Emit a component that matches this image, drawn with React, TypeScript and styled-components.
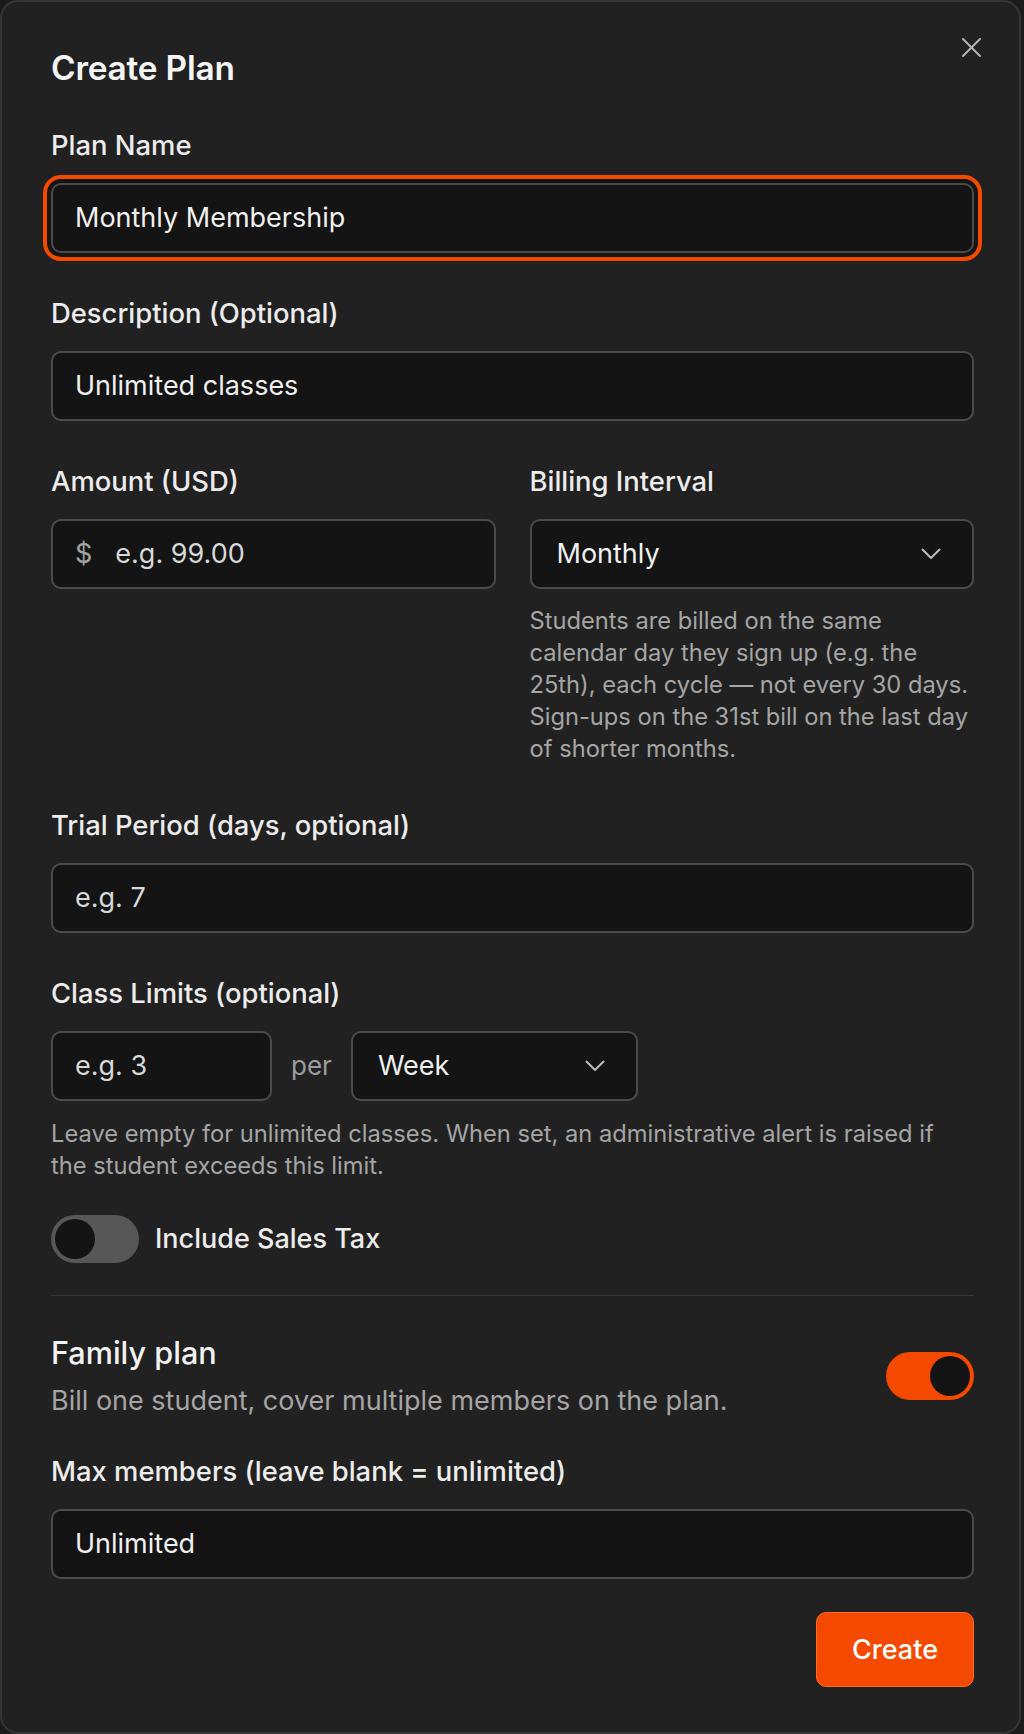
import styled, { createGlobalStyle, css } from 'styled-components';

const GlobalStyle = createGlobalStyle`
  html, body {
    margin: 0;
    padding: 0;
    background: #1b1b1b;
  }
  body {
    font-family: Inter, "Noto Sans", sans-serif;
    -webkit-font-smoothing: antialiased;
  }
  * {
    box-sizing: border-box;
  }
`;

const Panel = styled.div`
  position: relative;
  width: 1021px;
  background: #212121;
  border: 2px solid #353535;
  border-radius: 18px;
  padding: 46px 45px 45px 49px;
  color: #ececec;
`;

const Title = styled.h2`
  margin: 0;
  font-size: 33.4px;
  font-weight: 600;
  line-height: 40px;
  color: #f4f4f4;
  letter-spacing: -0.2px;
`;

const CloseButton = styled.button`
  position: absolute;
  top: 36px;
  right: 38px;
  width: 19px;
  height: 19px;
  padding: 0;
  border: 0;
  background: none;
  color: #b4b4b4;
  display: flex;
  align-items: center;
  justify-content: center;
  cursor: pointer;
`;

const Field = styled.div<{ $mt?: number }>`
  display: flex;
  flex-direction: column;
  gap: 22px;
  margin-top: ${({ $mt = 0 }) => $mt}px;
`;

const Label = styled.label`
  font-size: 27.4px;
  font-weight: 500;
  line-height: 32px;
  color: #ececec;
`;

const InputShell = styled.div<{ $focused?: boolean; $width?: number }>`
  display: flex;
  align-items: center;
  gap: 23px;
  height: 70px;
  padding: 0 22px;
  background: #141414;
  border: 2px solid #4b4b4b;
  border-radius: 10px;
  ${({ $width }) => $width && `width: ${$width}px; flex-shrink: 0;`}
  ${({ $focused }) =>
    $focused &&
    css`
      box-shadow: 0 0 0 4px #151515;
      outline: 4px solid #f54900;
      outline-offset: 4px;
    `}
`;

const TextInput = styled.input`
  flex: 1;
  min-width: 0;
  background: transparent;
  border: 0;
  outline: none;
  padding: 0;
  font-family: inherit;
  font-size: 27px;
  color: #f0f0f0;
  &::placeholder {
    color: #d8d8d8;
    opacity: 1;
  }
`;

const Prefix = styled.span`
  font-size: 27px;
  color: #a3a3a3;
`;

const SelectBox = styled.div<{ $width?: number }>`
  display: flex;
  align-items: center;
  justify-content: space-between;
  height: 70px;
  padding: 0 31px 0 25px;
  background: #141414;
  border: 2px solid #4b4b4b;
  border-radius: 10px;
  font-size: 27px;
  color: #f0f0f0;
  cursor: pointer;
  ${({ $width }) => $width && `width: ${$width}px; flex-shrink: 0;`}
`;

const TwoCols = styled.div`
  display: grid;
  grid-template-columns: minmax(0, 1fr) minmax(0, 1fr);
  column-gap: 34px;
  margin-top: 44px;
`;

const Column = styled.div`
  display: flex;
  flex-direction: column;
`;

const Helper = styled.p<{ $mt?: number }>`
  margin: ${({ $mt = 16 }) => $mt}px 0 0;
  font-size: 23.7px;
  line-height: 32px;
  color: #a5a5a5;
`;

const LimitRow = styled.div`
  display: flex;
  align-items: center;
  gap: 19px;
`;

const Per = styled.span`
  font-size: 26px;
  color: #9d9d9d;
`;

const SwitchRow = styled.label`
  display: flex;
  align-items: center;
  gap: 16px;
  margin-top: 33px;
  font-size: 27px;
  font-weight: 500;
  color: #ececec;
`;

const Track = styled.span<{ $on: boolean }>`
  display: flex;
  justify-content: ${({ $on }) => ($on ? 'flex-end' : 'flex-start')};
  align-items: center;
  flex-shrink: 0;
  width: 88px;
  height: 48px;
  padding: 4px;
  border-radius: 24px;
  background: ${({ $on }) => ($on ? '#f54900' : '#575757')};
`;

const Knob = styled.span`
  width: 40px;
  height: 40px;
  border-radius: 50%;
  background: #141414;
`;

const Divider = styled.hr`
  margin: 32px 0 0;
  border: 0;
  height: 1px;
  background: #363636;
`;

const FamilyRow = styled.div`
  display: flex;
  align-items: center;
  justify-content: space-between;
  margin-top: 39px;
`;

const FamilyTitle = styled.div`
  font-size: 30.6px;
  font-weight: 500;
  line-height: 36px;
  color: #f2f2f2;
`;

const FamilyDesc = styled.div`
  margin-top: 14px;
  font-size: 27px;
  line-height: 32px;
  color: #a5a5a5;
`;

const Footer = styled.div`
  display: flex;
  justify-content: flex-end;
  margin-top: 33px;
`;

const CreateButton = styled.button`
  height: 75px;
  padding: 0 35px;
  border: 1px solid #ff6a26;
  border-radius: 10px;
  background: #f54900;
  color: #ffffff;
  font-family: inherit;
  font-size: 27px;
  font-weight: 500;
  cursor: pointer;
`;

const Chevron = () => (
  <svg width="20" height="12" viewBox="0 0 20 12" fill="none">
    <polyline
      points="1.5,1.5 10,10 18.5,1.5"
      stroke="#bdbdbd"
      strokeWidth="2"
      strokeLinecap="round"
      strokeLinejoin="round"
    />
  </svg>
);

const CloseIcon = () => (
  <svg width="19" height="19" viewBox="0 0 19 19" fill="none">
    <path d="M1 1 L18 18 M18 1 L1 18" stroke="currentColor" strokeWidth="2" strokeLinecap="round" />
  </svg>
);

const App = () => {
  return (
    <>
      <GlobalStyle />
      <Panel>
        <Title>Create Plan</Title>
        <CloseButton aria-label="Close">
          <CloseIcon />
        </CloseButton>

        <Field $mt={40.5}>
          <Label>Plan Name</Label>
          <InputShell $focused>
            <TextInput defaultValue="Monthly Membership" />
          </InputShell>
        </Field>

        <Field $mt={44}>
          <Label>Description (Optional)</Label>
          <InputShell>
            <TextInput defaultValue="Unlimited classes" />
          </InputShell>
        </Field>

        <TwoCols>
          <Field>
            <Label>Amount (USD)</Label>
            <InputShell>
              <Prefix>$</Prefix>
              <TextInput placeholder="e.g. 99.00" />
            </InputShell>
          </Field>
          <Column>
            <Field>
              <Label>Billing Interval</Label>
              <SelectBox>
                Monthly
                <Chevron />
              </SelectBox>
            </Field>
            <Helper>
              Students are billed on the same calendar day they sign up (e.g. the 25th), each cycle — not
              every 30 days. Sign-ups on the 31st bill on the last day of shorter months.
            </Helper>
          </Column>
        </TwoCols>

        <Field $mt={44}>
          <Label>Trial Period (days, optional)</Label>
          <InputShell>
            <TextInput placeholder="e.g. 7" />
          </InputShell>
        </Field>

        <Field $mt={44}>
          <Label>Class Limits (optional)</Label>
          <LimitRow>
            <InputShell $width={221}>
              <TextInput placeholder="e.g. 3" />
            </InputShell>
            <Per>per</Per>
            <SelectBox $width={287}>
              Week
              <Chevron />
            </SelectBox>
          </LimitRow>
        </Field>
        <Helper $mt={17}>
          Leave empty for unlimited classes. When set, an administrative alert is raised if the student
          exceeds this limit.
        </Helper>

        <SwitchRow>
          <Track $on={false}>
            <Knob />
          </Track>
          Include Sales Tax
        </SwitchRow>

        <Divider />

        <FamilyRow>
          <div>
            <FamilyTitle>Family plan</FamilyTitle>
            <FamilyDesc>Bill one student, cover multiple members on the plan.</FamilyDesc>
          </div>
          <Track $on>
            <Knob />
          </Track>
        </FamilyRow>

        <Field $mt={38}>
          <Label>Max members (leave blank = unlimited)</Label>
          <InputShell>
            <TextInput defaultValue="Unlimited" />
          </InputShell>
        </Field>

        <Footer>
          <CreateButton>Create</CreateButton>
        </Footer>
      </Panel>
    </>
  );
};

export default App;
